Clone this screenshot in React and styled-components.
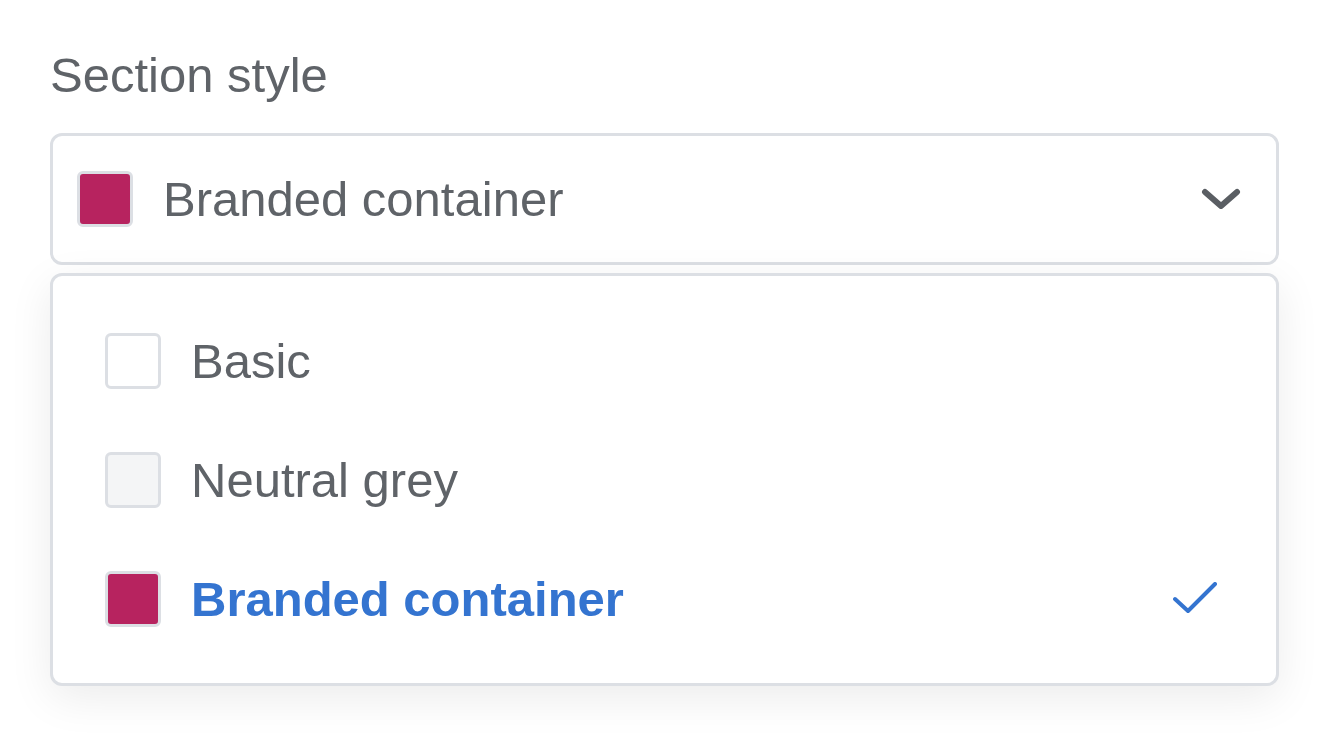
import React from "react";
import styled, { createGlobalStyle } from "styled-components";

const Global = createGlobalStyle`
  html, body { margin: 0; padding: 0; background: #ffffff; }
  body { font-family: "Liberation Sans", Arial, sans-serif; }
  * { box-sizing: border-box; }
`;

const Page = styled.div`
  min-height: 100vh;
  padding: 47px 45px 0 50px;
  display: flex;
  flex-direction: column;
`;

const Label = styled.div`
  font-size: 49px;
  line-height: 56px;
  color: #5f6368;
  margin-bottom: 30px;
`;

const Select = styled.div`
  height: 132px;
  border: 3px solid #dcdfe4;
  border-radius: 12px;
  display: flex;
  align-items: center;
  padding: 0 35px 0 24px;
  background: #fff;
`;

const Swatch = styled.span`
  width: 56px;
  height: 56px;
  flex: none;
  border: 3px solid #dcdfe4;
  border-radius: 6px;
  background: ${(p) => p.$fill};
`;

const Value = styled.span`
  flex: 1;
  margin-left: 30px;
  font-size: 49px;
  color: #5f6368;
`;

const Panel = styled.div`
  margin-top: 8px;
  border: 3px solid #dcdfe4;
  border-radius: 12px;
  padding: 25px 58px 25px 52px;
  background: #fff;
  box-shadow: 0 12px 44px rgba(0, 0, 0, 0.08);
  display: flex;
  flex-direction: column;
`;

const Option = styled.div`
  height: 119px;
  display: flex;
  align-items: center;
`;

const OptionText = styled.span`
  flex: 1;
  margin-left: 30px;
  font-size: 49px;
  font-weight: ${(p) => (p.$selected ? 700 : 400)};
  color: ${(p) => (p.$selected ? "#3474d0" : "#5f6368")};
`;

const Chevron = () => (
  <svg width="40" height="24" viewBox="0 0 40 24" fill="none">
    <path d="M4 5 L20 19 L36 5" stroke="#5a5e63" strokeWidth="6" strokeLinecap="round" strokeLinejoin="round" />
  </svg>
);

const Check = () => (
  <svg width="46" height="34" viewBox="0 0 46 34" fill="none">
    <path d="M3 17 L16 29 L43 2" stroke="#3474d0" strokeWidth="4" strokeLinecap="round" strokeLinejoin="round" />
  </svg>
);

const options = [
  { label: "Basic", fill: "#ffffff" },
  { label: "Neutral grey", fill: "#f4f5f6" },
  { label: "Branded container", fill: "#b7235f", selected: true },
];

export default function App() {
  return (
    <>
      <Global />
      <Page>
        <Label>Section style</Label>
        <Select>
          <Swatch $fill="#b7235f" />
          <Value>Branded container</Value>
          <Chevron />
        </Select>
        <Panel>
          {options.map((o) => (
            <Option key={o.label}>
              <Swatch $fill={o.fill} />
              <OptionText $selected={o.selected}>{o.label}</OptionText>
              {o.selected && <Check />}
            </Option>
          ))}
        </Panel>
      </Page>
    </>
  );
}
